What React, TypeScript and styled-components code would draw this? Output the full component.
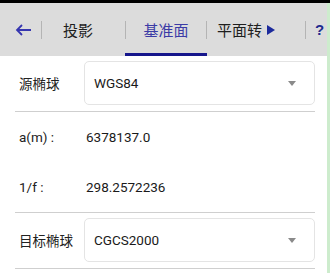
import React from 'react';
import styled, {createGlobalStyle} from "styled-components";

const GlobalStyle = createGlobalStyle`
  html, body {
    margin: 0;
    padding: 0;
    background: #ffffff;
    font-family: Roboto, "Noto Sans CJK SC", sans-serif;
  }
`

const tabs = [
    {title: "投影", width: 83, pad: 21, center: false},
    {title: "基准面", width: 82, pad: 0, center: true, active: true},
    {title: "平面转", width: 98, pad: 10, center: false, more: true},
]

const App = () => {
    return (
        <>
            <GlobalStyle/>
            <StatusBar/>
            <Screen>
                <Main>
                    <Toolbar>
                        <BackButton>
                            <svg width="17" height="12" viewBox="0 0 17 12">
                                <path d="M16 6H2M7 1L2 6l5 5" fill="none" stroke="#3636b0" strokeWidth="1.8"/>
                            </svg>
                        </BackButton>
                        {tabs.map((t) => (
                            <React.Fragment key={t.title}>
                                <Divider/>
                                <Tab $width={t.width} $pad={t.pad} $center={t.center} $active={!!t.active}>
                                    {t.title}
                                    {t.more && (
                                        <MoreArrow width="8" height="10" viewBox="0 0 8 10">
                                            <path d="M0 0L8 5L0 10Z" fill="#1c2a9c"/>
                                        </MoreArrow>
                                    )}
                                </Tab>
                            </React.Fragment>
                        ))}
                        <Divider/>
                        <Help>?</Help>
                    </Toolbar>

                    <Content>
                        <SelectRow>
                            <Label $width={69}>源椭球</Label>
                            <SelectBox>
                                <span>WGS84</span>
                                <Caret/>
                            </SelectBox>
                        </SelectRow>
                        <Line/>
                        <InfoRow>
                            <Label $width={71}>a(m) :</Label>
                            <Value>6378137.0</Value>
                        </InfoRow>
                        <InfoRow>
                            <Label $width={71}>1/f :</Label>
                            <Value>298.2572236</Value>
                        </InfoRow>
                        <Line/>
                        <SelectRow>
                            <Label $width={69}>目标椭球</Label>
                            <SelectBox>
                                <span>CGCS2000</span>
                                <Caret/>
                            </SelectBox>
                        </SelectRow>
                        <Line/>
                    </Content>
                </Main>
                <EdgeStrip/>
            </Screen>
        </>
    );
};

export default App;

const StatusBar = styled.div`
height: 3px;
background: #000000;
`

const Screen = styled.div`
display: flex;
height: 270px;
`

const Main = styled.div`
flex: 1;
min-width: 0;
display: flex;
flex-direction: column;
overflow: hidden;
`

const EdgeStrip = styled.div`
width: 3px;
background: #cdeccd;
`

const Toolbar = styled.div`
height: 53px;
display: flex;
align-items: center;
background: #dcdcdc;
flex-shrink: 0;
`

const BackButton = styled.div`
width: 41px;
height: 100%;
display: flex;
align-items: center;
justify-content: flex-start;
padding-left: 15px;
box-sizing: border-box;
`

const Divider = styled.div`
width: 1px;
height: 18px;
background: #b4b4b4;
flex-shrink: 0;
`

const Tab = styled.div<{ $width: number; $pad: number; $center: boolean; $active: boolean }>`
width: ${p => p.$width}px;
height: 100%;
box-sizing: border-box;
display: flex;
align-items: center;
justify-content: ${p => p.$center ? "center" : "flex-start"};
padding-left: ${p => p.$pad}px;
padding-top: ${p => p.$active ? 3 : 0}px;
border-bottom: ${p => p.$active ? "3px solid #16168c" : "none"};
margin: 0 ${p => p.$active ? -1 : 0}px;
position: relative;
font-family: "Noto Sans CJK SC", sans-serif;
font-size: 15px;
color: ${p => p.$active ? "#3b3ba6" : "#1e1e1e"};
white-space: nowrap;
`

const MoreArrow = styled.svg`
margin-left: 5px;
flex-shrink: 0;
`

const Help = styled.div`
padding-left: 9px;
font-family: "Liberation Sans", sans-serif;
font-weight: bold;
font-size: 15px;
color: #1e2a8e;
`

const Content = styled.div`
display: flex;
flex-direction: column;
padding: 0 12px 0 15px;
`

const SelectRow = styled.div`
display: flex;
align-items: center;
padding: 5px 0 6px;
`

const Label = styled.div<{ $width: number }>`
width: ${p => p.$width}px;
padding-left: 4px;
box-sizing: border-box;
font-family: Roboto, "Noto Sans CJK SC", sans-serif;
font-size: 13.5px;
color: #222222;
flex-shrink: 0;
`

const SelectBox = styled.div`
flex: 1;
height: 44px;
box-sizing: border-box;
border: 1px solid #e4e4e4;
border-radius: 5px;
display: flex;
align-items: center;
justify-content: space-between;
padding: 0 18px 0 9px;
font-family: Roboto, sans-serif;
font-size: 13.5px;
color: #1a1a1a;
`

const Caret = styled.div`
width: 0;
height: 0;
border-left: 4px solid transparent;
border-right: 4px solid transparent;
border-top: 5px solid #8a8a8a;
margin-top: 1px;
`

const Line = styled.div`
height: 1px;
background: #cfcfcf;
`

const InfoRow = styled.div`
height: 50px;
display: flex;
align-items: center;
`

const Value = styled.div`
font-family: Roboto, sans-serif;
font-size: 13.5px;
color: #1a1a1a;
`
